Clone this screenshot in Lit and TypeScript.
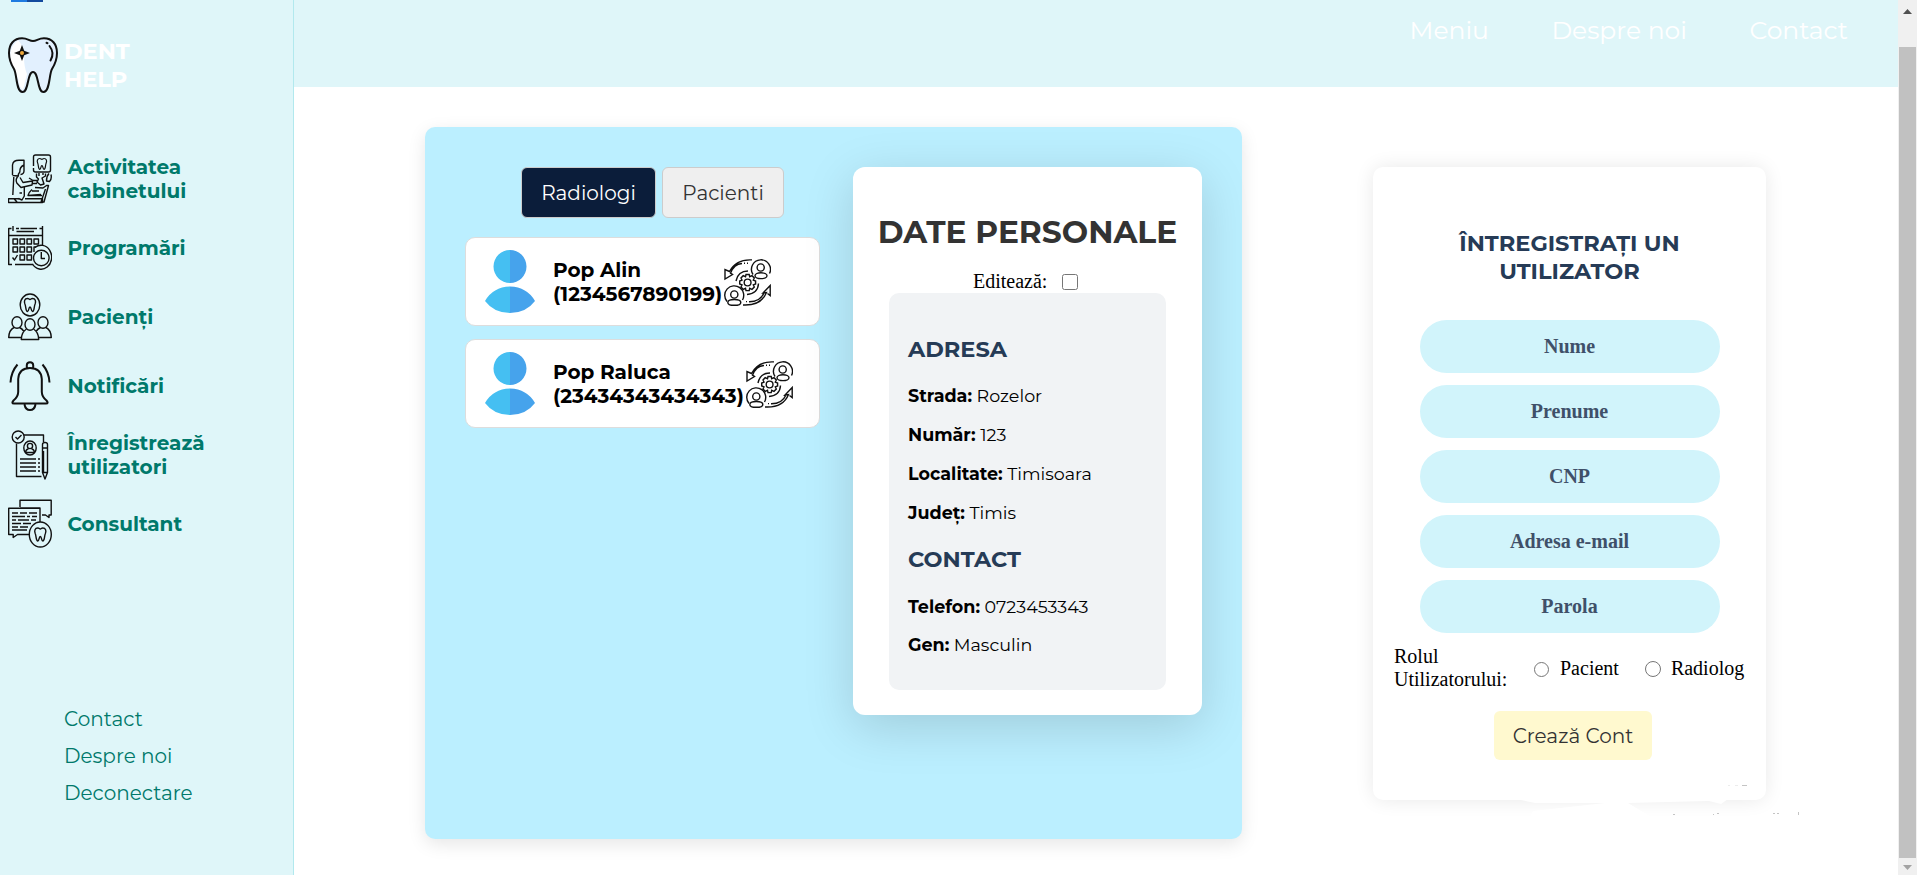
import { LitElement, html, svg, css } from "lit";
import { customElement } from "lit/decorators.js";

const tooth = svg`<path d="M3 0C0 0-.6 3 .4 5.5C1.6 8 1 13 3 13C4.6 13 4 8.5 5.5 8.5C7 8.5 6.4 13 8 13C10 13 9.400 8 10.600 5.500C11.600 3 11 0 8 0C6.500 0 6.500 1 5.500 1C4.500 1 4.500 0 3 0Z"/>`;

const icons = {
  clinic: svg`
    <path d="M25.500 12V3Q25.500 1 27.500 1H40.500Q42.500 1 42.500 3V16Q42.500 18 40.500 18H27.500Q25.500 18 25.500 16V14"/>
    <g transform="translate(29.300 4.500) scale(.84)">${tooth}</g>
    <path d="M4.500 21V11Q5 6.200 11 6.200H16V11Q11.500 13 11.800 18Q10 20 10.300 22L4.500 21.500M16 11V17Q16 20 12.500 20.500M10.300 22Q7 25 8.800 29L13 33.500L24 31L24.500 27L15 28.500L12 23.500"/>
    <path d="M5.800 23L4.800 41M16.300 33V42L14 46L10.500 44.500M11.500 39H14"/>
    <path d="M21 24L25 26.500H30.500M24 29.500H29M28.500 19.500V23L30.500 25L29 28L32.500 31L36 30L34 24L37.500 22V19.500M31 19V22M35 19V21"/>
    <path d="M43 20.500Q44 25 41.500 27.500L38.500 27Q38.500 22 41 19.500M27 33.500L35 34L38.500 31.500H40.500L36 48H32.500M24 35.500Q21 38 20 41.500L33 40.500M20 41.500H34M24 37H31M37.500 35L33 48"/>
    <path d="M17 44.700H34.500V48.500H.5V44.700H11M6 44.700L9 48"/>`,
  calendar: svg`
    <path d="M5 3V8M34.500 3V8M8 5.500H11M12.500 5.500H29M8.500 8.500H26M31.500 5.500H34.500V22.500M3.500 5.500H.7V41.500H4M7 41.500H25M.7 12.500H34.500"/>
    <path d="M5 16H9.500V21H5ZM12 16H16.500V21H12ZM19 16H23.500V21H19ZM26 16H30.500V21H26ZM5 24H9.500V29H5ZM12 24H16.500V29H12ZM19 24H23.500V29H19ZM28 24H26V29M12 32H16.500V37H12ZM19 32H23.500V37H19ZM4.500 34.500L6.500 37L9.500 32"/>
    <circle cx="33.300" cy="35" r="7.800"/><path d="M27 24.500A10.500 12 0 1 1 24.500 41M33.300 29V35.500H37"/>`,
  patients: svg`
    <ellipse cx="22" cy="13" rx="9.800" ry="11"/><g transform="translate(16.500 6.500)">${tooth}</g>
    <ellipse cx="9" cy="30.500" rx="5" ry="5.800"/><ellipse cx="35" cy="30.500" rx="5" ry="5.800"/><ellipse cx="22" cy="32.500" rx="5" ry="5.800"/>
    <path d="M6 35.500Q1 38 .7 45.500H13M11.500 35.500Q14 36.500 16 39.500M38 35.500Q43 38 43.300 45.500H31M32.500 35.500Q30 36.500 28 39.500M18.500 37Q13.500 40 13.300 47.500H30.700Q30.500 40 25.500 37"/>`,
  bell: svg`<g stroke-width="2">
    <path d="M18.800 7V4Q19 1.200 22 1.200Q25 1.200 25.200 4V7M10.200 18Q11 7 22 7Q33 7 33.800 18V31Q34 36 38.500 39.500Q41 42.500 38 42.500H6Q3 42.500 5.500 39.500Q10 36 10.200 31ZM16.500 43.500Q17.500 49 22 49Q26.500 49 27.500 43.500"/>
    <path d="M9.500 3.500Q3 11 2.500 21.500M34.500 3.500Q41 11 41.500 21.500"/></g>`,
  register: svg`
    <circle cx="10.200" cy="7" r="6"/><path d="M7.500 7L9.500 9L13.500 5M15.500 5H35.500V12M8.500 13.500V46.500H33.500M35.500 21V43"/>
    <ellipse cx="22" cy="18" rx="6.200" ry="7"/><circle cx="22" cy="16" r="2.600"/><path d="M17.500 22.500Q18 19 20.500 19M26.500 22.500Q26 19 23.500 19M18 22.500H26"/>
    <path d="M12 29H28M30 29H32M12 33H28M30 33H32M12 37H28M30 37H32M12 41H28M30 41H32"/>
    <path d="M34.500 18V14.500Q34.500 12.500 37 12.500Q39.500 12.500 39.500 14.500V42.500L37 49L34.500 42.500ZM34.500 18H39.500M34.500 42.500H39.500"/>`,
  consult: svg`
    <path d="M12 8V1.200H43.200V16H41V18.500L37.500 16H34M12 9H32V23M32 9.200H.7V35.500H5.200V38.500L9.500 35.500H21"/>
    <path stroke-width="1.700" d="M4 14H10M12 14H19M21 14H29M4 17.500H17M19 17.500H22M24 17.500H29M4 21H8M10 21H21M23 21H28M4 24.500H13M15 24.500H23M4 28H10M12 28H20M4 31H19"/>
    <ellipse cx="32.300" cy="35.500" rx="11" ry="12.500"/><g transform="translate(26.800 29)">${tooth}</g>`,
};

const logo = svg`
  <path class="fill-light" d="M14 1.300C20 1.300 21 4 25 4C29 4 30 1.300 36 1.300C44 1.300 49 7 49 16C49 23 46.500 28 44 32C41 37 42 55 35.500 55C29 55 31 35 25 35C19 35 21 55 14.500 55C8 55 9 37 6 32C3.500 28 1 23 1 16C1 7 6 1.300 14 1.300Z"/>
  <path class="fill-white" d="M10 3Q15 8 16 20Q16 30 19 37L15 53Q11 50 10.500 43Q8 34 3.500 27Q-1 12 10 3Z"/>
  <path class="logo-line" d="M14 1.300C20 1.300 21 4 25 4C29 4 30 1.300 36 1.300C44 1.300 49 7 49 16C49 23 46.500 28 44 32C41 37 42 55 35.500 55C29 55 31 35 25 35C19 35 21 55 14.500 55C8 55 9 37 6 32C3.500 28 1 23 1 16C1 7 6 1.300 14 1.300Z"/>
  <path class="logo-line" d="M41.500 9Q47 16 42.500 23.500M38.500 5.800L39.500 6.200"/>
  <path d="M14 8L16.200 13.800L22 16L16.200 18.200L14 24L11.800 18.200L6 16L11.800 13.800Z" fill="#111"/><circle cx="14" cy="16" r="2" fill="#f0a83a"/>`;

const avatar = html`<svg class="avatar" viewBox="0 0 50 63">
  <path d="M25 0A16.500 16.500 0 0 0 25 33ZM25 36.500Q8 37 0 51Q9 63 25 63Z" fill="#45bff2"/>
  <path d="M25 0A16.500 16.500 0 0 1 25 33ZM25 36.500Q42 37 50 51Q41 63 25 63Z" fill="#46a3ec"/></svg>`;

const swap = html`<svg class="swap" viewBox="0 0 47 47">
  <path d="M28 .9Q12 0 5.500 12.500L1 10.500V20L8.500 15.500L6.500 14.200Q10 5 18 4.500M20 4.300H21M23 4.300H24M19 46Q37 47 42.500 33.500L39 34L46.200 26.500V36.500L43.500 34.500M22 42.600H23M25 42.800Q36 43 40 34"/>
  <circle cx="36.700" cy="8.500" r="3.600"/><path d="M29 15.500A9.500 9.500 0 1 1 45.500 14.500"/><ellipse cx="37" cy="16.700" rx="6" ry="2.900"/>
  <circle cx="10.300" cy="35.500" r="3.600"/><path d="M3 42.500A9.500 9.500 0 1 1 18.500 41"/><ellipse cx="10.300" cy="43.400" rx="6.500" ry="2.900"/>
  <circle cx="23.600" cy="23.500" r="3.400"/>
  <path d="M22 15.500H25.200L25.700 17.700L28 16.700L30.300 19L29.300 21.200L31.600 22V25L29.300 25.800L30.300 28L28 30.300L25.700 29.300L25.200 31.600H22L21.500 29.300L19.200 30.300L17 28L18 25.800L15.700 25V22L18 21.200L17 19L19.200 16.700L21.500 17.700Z"/>
  <path d="M12 22Q14 12 24 12M34.500 24.500Q34 34.500 23 35.500"/></svg>`;

const menu = [
  ["clinic", "Activitatea cabinetului"],
  ["calendar", "Programări"],
  ["patients", "Pacienți"],
  ["bell", "Notificări"],
  ["register", "Înregistrează utilizatori"],
  ["consult", "Consultant"],
] as const;

const people = [
  ["Pop Alin", "1234567890199"],
  ["Pop Raluca", "23434343434343"],
];

const address = [["Strada", "Rozelor"], ["Număr", "123"], ["Localitate", "Timisoara"], ["Județ", "Timis"]];
const contact = [["Telefon", "0723453343"], ["Gen", "Masculin"]];

@customElement("app-root")
export class AppRoot extends LitElement {
  static styles = css`
    * { box-sizing: border-box; }
    :host { display: flex; height: 875px; overflow: hidden; background: #fff; font: 400 20px/24px Montserrat, sans-serif; color: #000; }
    .sidebar { flex: 0 0 294px; background: #dff6f9; border-right: 1px solid #b2e9ee; display: flex; flex-direction: column; }
    .peek { height: 2px; width: 32px; margin-left: 11px; background: linear-gradient(90deg, #1f7ae0 50%, #134a9e 50%); }
    .brand { display: flex; margin: 35px 0 0 8px; }
    .logo { width: 50px; height: 56px; flex: none; }
    .fill-light { fill: #e2f0fe; } .fill-white { fill: #fff; }
    .logo-line { fill: none; stroke: #111; stroke-width: 2; stroke-linecap: round; }
    .name { margin: 0 0 0 6px; width: 90px; font-weight: 700; font-size: 22.500px; line-height: 28px; color: #fff; }
    .menu { margin-top: 52px; display: flex; flex-direction: column; }
    .item { height: 68.900px; display: flex; align-items: center; padding-left: 8px; gap: 15.500px; color: #00796b; font-weight: 700; }
    .item span { width: 160px; }
    .icon { width: 44px; height: 50px; flex: none; fill: none; stroke: #111; stroke-width: 1.4; stroke-linejoin: round; }
    .links { margin: 149px 0 0 64px; display: flex; flex-direction: column; gap: 12.600px; color: #00796b; }
    .main { flex: 1; min-width: 0; display: flex; flex-direction: column; }
    .header { height: 87px; background: #dff6f9; display: flex; justify-content: flex-end; gap: 62.500px; padding: 15px 50px 0 0; color: #fff; font-size: 25px; line-height: 30px; }
    .content { display: flex; align-items: flex-start; padding: 40px 0 0 131px; }
    .panel { width: 817px; height: 712px; border-radius: 10px; background: #bbefff; box-shadow: 0 5px 18px rgba(0,0,0,.1); padding: 40px; display: flex; gap: 33px; }
    .list { width: 355px; display: flex; flex-direction: column; }
    .tabs { display: flex; justify-content: center; gap: 6.500px; margin-bottom: 19px; padding-left: 20px; }
    .tab { height: 51px; padding: 0 19px; border: 1px solid #ccc; border-radius: 6px; background: #efefef; color: #333; font: inherit; }
    .tab.active { background: #0b1d3a; color: #fff; }
    .person { height: 89px; margin-bottom: 13px; border: 1px solid #ddd; border-radius: 10px; background: #fff; display: flex; align-items: center; padding-left: 19px; font-weight: 700; }
    .avatar { width: 50px; height: 63px; margin-right: 18px; }
    .swap { width: 47px; height: 47px; margin: 2px 0 0 2px; fill: none; stroke: #111; stroke-width: 1.4; }
    .profile { width: 349px; height: 548px; border-radius: 12px; background: #fff; box-shadow: 0 12px 50px rgba(0,0,0,.15); padding-top: 46px; }
    .title { margin: 0 0 19px; text-align: center; font-size: 31.250px; line-height: 38px; font-weight: 700; color: #333; white-space: nowrap; }
    .edit { height: 23px; padding-left: 120px; display: flex; align-items: center; gap: 15px; font: 20px/23px "Liberation Serif", serif; }
    .check { width: 16px; height: 16px; margin: 0; }
    .details { width: 277px; height: 397px; margin: 0 36px; padding: 42.500px 19px 0; background: #f1f3f5; border-radius: 10px; font-size: 17.500px; line-height: 21.300px; }
    .group { margin: 0 0 22.500px; font-size: 22.500px; line-height: 27.400px; font-weight: 700; color: #263b56; }
    .row { margin: 0 0 17.500px; font-weight: 400; }
    .row strong { font-weight: 700; }
    .row + .group { margin-top: 22.500px; }
    .form { position: relative; width: 393px; height: 633px; margin: 40px 0 0 131px; border-radius: 10px; background: #fff; box-shadow: 0 0 19px rgba(0,0,0,.09); display: flex; flex-direction: column; align-items: center; padding-top: 62px; }
    .form-title { margin: 0 0 35px; width: 300px; text-align: center; font-size: 22.500px; line-height: 28px; font-weight: 700; color: #263b56; }
    .field { width: 300px; height: 53px; margin-bottom: 12px; padding: 0; border: 0; border-radius: 27px; background: #d1f4fb; text-align: center; font: 700 20px "Liberation Serif", serif; }
    .field::placeholder { color: #3f5069; opacity: 1; }
    .roles { width: 100%; display: flex; align-items: center; padding-left: 21px; font: 20px/23px "Liberation Serif", serif; }
    .role-label { width: 140px; }
    .radio { margin: 2px 11px 0 0; width: 15px; height: 15px; }
    .second { margin-left: 26px; width: 16px; height: 16px; margin-right: 10px; }
    .create { margin: 20px 0 0 7px; width: 158px; height: 49px; padding: 0; border: 0; border-radius: 6px; background: #fff9cf; color: #333; font: inherit; }
    .smudge { position: absolute; left: 140px; top: 613px; width: 300px; height: 60px; pointer-events: none; }
    .scroll { flex: 0 0 19px; background: #f0f0f0; display: flex; flex-direction: column; align-items: center; padding: 9px 0 5px; }
    .arrow { width: 9px; height: 5px; flex: none; background: #505050; clip-path: polygon(50% 0, 100% 100%, 0 100%); }
    .arrow.down { background: #a3a3a3; clip-path: polygon(0 0, 100% 0, 50% 100%); }
    .thumb { width: 17px; height: 811px; margin: 33px 0 7px; background: #c1c1c1; flex: none; }
  `;

  private rows(list: string[][]) {
    return list.map(([k, v]) => html`<p class="row"><strong>${k}:</strong> ${v}</p>`);
  }

  render() {
    return html`
      <aside class="sidebar">
        <div class="peek"></div>
        <div class="brand"><svg class="logo" viewBox="0 0 50 56">${logo}</svg><h3 class="name">DENT HELP</h3></div>
        <nav class="menu">
          ${menu.map(([i, t]) => html`<a class="item"><svg class="icon" viewBox="0 0 44 50">${icons[i]}</svg><span>${t}</span></a>`)}
        </nav>
        <nav class="links"><a>Contact</a><a>Despre noi</a><a>Deconectare</a></nav>
      </aside>
      <div class="main">
        <header class="header"><a>Meniu</a><a>Despre noi</a><a>Contact</a></header>
        <div class="content">
          <section class="panel">
            <div class="list">
              <div class="tabs"><button class="tab active">Radiologi</button><button class="tab">Pacienti</button></div>
              ${people.map(([n, c]) => html`<div class="person">${avatar}<div>${n}<br>(${c})</div>${swap}</div>`)}
            </div>
            <article class="profile">
              <h2 class="title">DATE PERSONALE</h2>
              <label class="edit">Editează:<input class="check" type="checkbox"></label>
              <div class="details">
                <h3 class="group">ADRESA</h3>${this.rows(address)}
                <h3 class="group">CONTACT</h3>${this.rows(contact)}
              </div>
            </article>
          </section>
          <form class="form">
            <h3 class="form-title">ÎNTREGISTRAȚI UN UTILIZATOR</h3>
            ${["Nume", "Prenume", "CNP", "Adresa e-mail", "Parola"].map((p) => html`<input class="field" placeholder=${p}>`)}
            <div class="roles">
              <span class="role-label">Rolul<br>Utilizatorului:</span>
              <input class="radio" type="radio" name="role"><span>Pacient</span>
              <input class="radio second" type="radio" name="role"><span>Radiolog</span>
            </div>
            <button class="create" type="button">Crează Cont</button>
            <svg class="smudge" viewBox="0 0 300 60">
              <path fill="#fff" d="M8 20L22 23L92 23L20 31L10 50H160L130 32L115 23L196 21L208 24L215 19V10H8Z"/>
              <path stroke="#ececec" d="M215 5.500H217M222 5.500H225"/>
              <path stroke="#c4c4c4" d="M229 5.500H234M160 34.500H162M200 34.500H201M204 33.500H206M260 33.500H262M264 33.500H266M285.500 32V35"/>
            </svg>
          </form>
        </div>
      </div>
      <div class="scroll"><div class="arrow"></div><div class="thumb"></div><div class="arrow down"></div></div>
    `;
  }
}
